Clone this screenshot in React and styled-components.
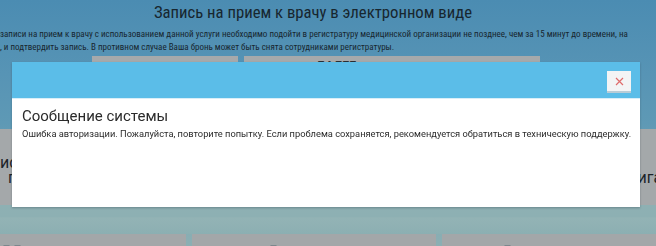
import React from "react";
import styled, { createGlobalStyle } from "styled-components";

const GlobalStyle = createGlobalStyle`
  html, body {
    margin: 0;
    padding: 0;
    overflow: hidden;
  }
  body {
    font-family: "Roboto Condensed", "Liberation Sans Narrow", "DejaVu Sans Condensed", Roboto, sans-serif;
  }
`;

// страница под затемнением
const Page = styled.div`
  width: 656px;
  height: 246px;
  overflow: hidden;
  background: linear-gradient(180deg, #4b8cb2 0%, #5794b5 30%, #5e99b5 50%, #7aa6b3 75%, #8cafb3 100%);
  display: flex;
  flex-direction: column;

  & > * {
    flex-shrink: 0;
  }
`;

const Title = styled.h1`
  margin: 0;
  padding: 3px 30px 0 0;
  height: 22px;
  text-align: center;
  font-size: 16.7px;
  font-weight: 400;
  line-height: 20px;
  color: #17262f;
`;

const Notice = styled.div`
  margin-top: 3px;
  height: 26px;
  font-size: 9px;
  line-height: 13px;
  color: #17262f;
  white-space: nowrap;
`;

const ButtonsRow = styled.div`
  display: flex;
  gap: 6px;
  margin-top: 2px;
  padding-left: 92px;
  height: 73px;
`;

const TopButton = styled.div`
  width: ${(p) => p.$w}px;
  height: 73px;
  background: #a6a9ab;
  font-size: 14px;
  font-weight: 700;
  line-height: 16px;
  color: #2a2f33;
  padding: 3px 0 0 ${(p) => p.$pad || 0}px;
  box-sizing: border-box;
`;

const CardsRow = styled.div`
  display: grid;
  grid-template-columns: 186px 244px 1fr;
  column-gap: 5px;
  height: 76px;
`;

const Card = styled.div`
  background: #a4a8aa;
  display: flex;
  flex-direction: column;
  justify-content: center;
  align-items: ${(p) => (p.$center ? "center" : "flex-start")};
  font-family: Roboto, sans-serif;
  font-size: 16px;
  line-height: 15px;
  color: #1c2328;
  white-space: nowrap;
  overflow: hidden;
  padding: 6px 0 0 ${(p) => p.$pad || 0}px;
  box-sizing: border-box;
`;

const CardLine = styled.span`
  display: block;
  padding-left: ${(p) => p.$indent || 0}px;
`;

const Band = styled.div`
  height: 29px;
  background: linear-gradient(180deg, #8eb0b3 0%, #8db0b3 40%, #93b3b5 45%, #8cafb2 100%);
`;

const BottomRow = styled.div`
  display: grid;
  grid-template-columns: 186px 244px 1fr;
  column-gap: 6px;
  flex: 1;
`;

const BottomCard = styled.div`
  background: #a3a7a9;
  display: flex;
  gap: 4px;
  padding: 11px 0 0 ${(p) => p.$pad}px;
`;

// верхушки иконок карточек, виден только край
const IconTop = styled.span`
  display: block;
  width: 5px;
  height: 6px;
  border: 1.5px solid #7d878d;
  border-radius: 1px;
`;

// модальное окно
const Modal = styled.div`
  position: fixed;
  top: 62px;
  left: 12px;
  width: 628px;
  height: 145px;
  background: #ffffff;
  box-shadow: 0 1px 2px rgba(40, 60, 70, 0.35);
  display: flex;
  flex-direction: column;
`;

const ModalHeader = styled.div`
  height: 37px;
  flex-shrink: 0;
  background: #5bbde8;
  border-bottom: 1px solid #d8eef8;
  display: flex;
  justify-content: flex-end;
  align-items: flex-start;
  padding: 9px 9px 0 0;
  box-sizing: border-box;
`;

const CloseButton = styled.button`
  width: 24px;
  height: 20px;
  padding: 0;
  border: none;
  background: #f3f4f5;
  box-shadow: 0 2px 0 #b9ccd6;
  display: flex;
  align-items: center;
  justify-content: center;
  cursor: pointer;
`;

const ModalBody = styled.div`
  padding: 8px 10px;
  font-family: Roboto, sans-serif;
  color: #2b2b2b;
`;

const ModalTitle = styled.div`
  font-size: 15px;
  line-height: 18px;
  margin-bottom: 3px;
`;

const ModalText = styled.div`
  font-size: 9.3px;
  line-height: 12px;
  white-space: nowrap;
`;

export default function App() {
  return (
    <>
      <GlobalStyle />
      <Page>
        <Title>Запись на прием к врачу в электронном виде</Title>
        <Notice>
          записи на прием к врачу с использованием данной услуги необходимо подойти в регистратуру медицинской организации не позднее, чем за 15 минут до времени, на
          <br />
          , и подтвердить запись. В противном случае Ваша бронь может быть снята сотрудниками регистратуры.
        </Notice>
        <ButtonsRow>
          <TopButton $w={146} />
          <TopButton $w={296} $pad={72}>ДАЛЕЕ</TopButton>
        </ButtonsRow>
        <CardsRow>
          <Card>
            <CardLine>исследование</CardLine>
            <CardLine $indent={8}>по направлению</CardLine>
          </Card>
          <Card $center>
            <CardLine>Запись</CardLine>
            <CardLine>к специалисту</CardLine>
          </Card>
          <Card $pad={77}>
            <CardLine>Вызов врача</CardLine>
            <CardLine>Электронная книга</CardLine>
          </Card>
        </CardsRow>
        <Band />
        <BottomRow>
          <BottomCard $pad={3}>
            <IconTop />
            <IconTop />
          </BottomCard>
          <BottomCard $pad={78}>
            <IconTop />
          </BottomCard>
          <BottomCard $pad={62}>
            <IconTop />
          </BottomCard>
        </BottomRow>
      </Page>
      <Modal>
        <ModalHeader>
          <CloseButton aria-label="Закрыть">
            <svg width="9" height="9" viewBox="0 0 9 9">
              <path d="M1 1 L8 8 M8 1 L1 8" stroke="#df6b6b" strokeWidth="1.2" />
            </svg>
          </CloseButton>
        </ModalHeader>
        <ModalBody>
          <ModalTitle>Сообщение системы</ModalTitle>
          <ModalText>
            Ошибка авторизации. Пожалуйста, повторите попытку. Если проблема сохраняется, рекомендуется обратиться в техническую поддержку.
          </ModalText>
        </ModalBody>
      </Modal>
    </>
  );
}
